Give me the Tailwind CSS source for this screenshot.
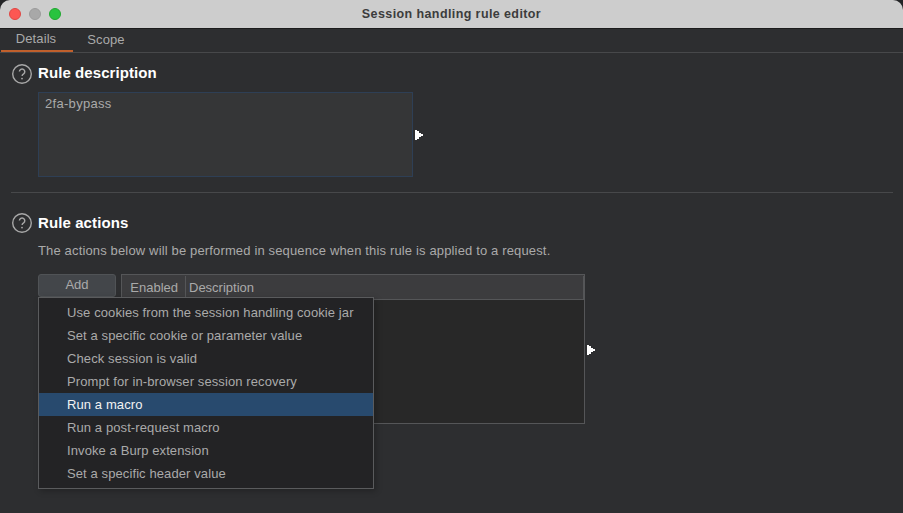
<!DOCTYPE html>
<html><head><meta charset="utf-8"><script src="https://cdn.jsdelivr.net/npm/@tailwindcss/browser@4"></script></head>
<body class="m-0 bg-[#232426]">
<div class="w-[903px] h-[513px] overflow-hidden bg-[#2d2e30] rounded-t-[10px] font-['Liberation_Sans',sans-serif] text-[13px] text-[#aaaaaa] flex flex-col">
  <header class="relative h-[29px] shrink-0 bg-[#cdcdcd] border-b border-[#1c1c1c] flex items-center justify-center">
    <div class="absolute left-[9px] top-[8px] flex gap-[8px]">
      <span class="w-3 h-3 rounded-full bg-[#fc5753] border border-[#df4744]"></span>
      <span class="w-3 h-3 rounded-full bg-[#a8a8a8] border border-[#9c9c9c]"></span>
      <span class="w-3 h-3 rounded-full bg-[#28c33f] border border-[#1fa82f]"></span>
    </div>
    <span class="text-[12.5px] font-bold text-[#3c3c3c] tracking-[0.4px]">Session handling rule editor</span>
  </header>
  <nav class="h-[24px] shrink-0 flex border-b border-[#47484a] pl-[1px] tracking-[0.1px]">
    <div class="w-[72px] h-[23px] border-b-2 border-[#c1602c] flex items-center justify-center pr-[2px] pb-[1px]">Details</div>
    <div class="w-[66px] flex items-center justify-center pb-[2px]">Scope</div>
  </nav>
  <main class="relative flex-1 pl-[11px] pr-[10px]">
    <section class="h-[140px] border-b border-[#47484a] pt-[10px]">
      <div class="flex items-center gap-[5px] h-[22px]">
        <svg class="w-[22px] h-[22px]" viewBox="0 0 22 22" fill="none"><circle cx="11" cy="11" r="9.3" stroke="#a8a8a8" stroke-width="1.4"/><path d="M8.4 8.6a2.7 2.7 0 1 1 4.2 2.3c-1 .6-1.5 1.1-1.5 2.2" stroke="#a8a8a8" stroke-width="1.4"/><circle cx="11" cy="15.6" r=".9" fill="#a8a8a8"/></svg>
        <h2 class="text-[15px] font-bold text-white tracking-[0.08px] mb-[2px]">Rule description</h2>
      </div>
      <div class="flex items-center mt-[7px] ml-[27px]">
        <div class="w-[375px] h-[85px] bg-[#353637] border border-[#2e3f55] px-[6px] py-[3px] leading-[16px] tracking-[0.3px]">2fa-bypass</div>
        <svg class="w-2 h-[10px] ml-[2px] mt-[1px]" viewBox="0 0 8 10"><path d="M0 0h2v1h2v2h2v1h2v2H6v1H4v2H2v1H0z" fill="#fff"/></svg>
      </div>
    </section>
    <section class="pt-[19px]">
      <div class="flex items-center gap-[5px] h-[22px]">
        <svg class="w-[22px] h-[22px]" viewBox="0 0 22 22" fill="none"><circle cx="11" cy="11" r="9.3" stroke="#a8a8a8" stroke-width="1.4"/><path d="M8.4 8.6a2.7 2.7 0 1 1 4.2 2.3c-1 .6-1.5 1.1-1.5 2.2" stroke="#a8a8a8" stroke-width="1.4"/><circle cx="11" cy="15.6" r=".9" fill="#a8a8a8"/></svg>
        <h2 class="text-[15px] font-bold text-white tracking-[0.1px]">Rule actions</h2>
      </div>
      <p class="ml-[27px] mt-[9px] leading-[16px] tracking-[0.15px]">The actions below will be performed in sequence when this rule is applied to a request.</p>
      <div class="flex items-start ml-[27px] mt-[15px]">
        <button class="w-[78px] h-[23px] bg-[#43464a] border border-[#505356] rounded-[3px] text-[#aaaaaa] pb-[1px]">Add</button>
        <div class="ml-[5px] w-[464px] h-[150px] bg-[#282828] border border-[#555658] flex flex-col">
          <div class="h-[25px] shrink-0 bg-[#3c3c3e] border-b border-[#555658] flex items-center pt-[1px]">
            <div class="w-[64px] h-full border-r border-[#555658] flex items-center justify-end pr-[7px]">Enabled</div>
            <div class="flex-1 pl-[3px]">Description</div>
            <div class="w-[1px] h-full bg-[#555658]"></div>
          </div>
        </div>
        <svg class="w-2 h-[10px] ml-[2px] mt-[71px]" viewBox="0 0 8 10"><path d="M0 0h2v1h2v2h2v1h2v2H6v1H4v2H2v1H0z" fill="#fff"/></svg>
      </div>
    </section>
    <ul class="absolute left-[38px] top-[244px] w-[336px] h-[192px] bg-[#232325] border border-[#5a5b5d] py-[3px] shadow-[2px_2px_6px_rgba(0,0,0,0.25)] tracking-[0.1px]">
      <li class="h-[23px] leading-[23px] pl-[28px]">Use cookies from the session handling cookie jar</li>
      <li class="h-[23px] leading-[23px] pl-[28px]">Set a specific cookie or parameter value</li>
      <li class="h-[23px] leading-[23px] pl-[28px]">Check session is valid</li>
      <li class="h-[23px] leading-[23px] pl-[28px]">Prompt for in-browser session recovery</li>
      <li class="h-[23px] leading-[23px] pl-[28px] bg-[#284a6e] text-[#f2f2f2]">Run a macro</li>
      <li class="h-[23px] leading-[23px] pl-[28px]">Run a post-request macro</li>
      <li class="h-[23px] leading-[23px] pl-[28px]">Invoke a Burp extension</li>
      <li class="h-[23px] leading-[23px] pl-[28px]">Set a specific header value</li>
    </ul>
  </main>
</div>
</body></html>
